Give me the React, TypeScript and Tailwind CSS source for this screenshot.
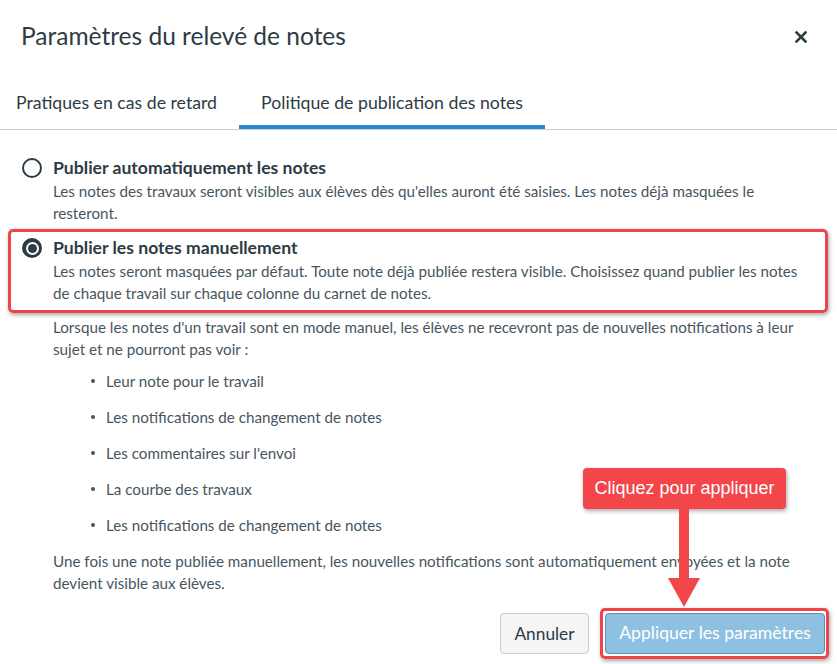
import React from "react";

const bullets = [
  "Leur note pour le travail",
  "Les notifications de changement de notes",
  "Les commentaires sur l'envoi",
  "La courbe des travaux",
  "Les notifications de changement de notes",
];

function Radio({ checked }: { checked?: boolean }) {
  return checked ? (
    <span className="mt-[2px] flex h-[20px] w-[20px] shrink-0 items-center justify-center rounded-full bg-[#2d3b45]">
      <span className="flex h-[13px] w-[13px] items-center justify-center rounded-full bg-white">
        <span className="h-[9px] w-[9px] rounded-full bg-[#2d3b45]" />
      </span>
    </span>
  ) : (
    <span className="mt-[2px] h-[20px] w-[20px] shrink-0 rounded-full border-2 border-[#2d3b45] bg-white" />
  );
}

export default function App() {
  return (
    <div
      className="relative h-[664px] w-[837px] overflow-hidden bg-white text-[#2d3b45]"
      style={{ fontFamily: "Lato, 'Noto Sans', sans-serif" }}
    >
      {/* Header */}
      <div className="flex h-[72px] items-center justify-between pl-[21px] pr-[30px]">
        <h1 className="text-[24.5px] leading-none text-[#2d3b45]">Paramètres du relevé de notes</h1>
        <svg width="12" height="12" viewBox="0 0 12 12" className="mt-[2px]">
          <path d="M1.5 1.5 L10.5 10.5 M10.5 1.5 L1.5 10.5" stroke="#2d3b45" strokeWidth="2.6" strokeLinecap="square" />
        </svg>
      </div>

      {/* Tabs */}
      <div className="flex h-[58px] items-end border-b border-[#c7cdd1]">
        <div className="flex h-full items-center pl-[16px] pr-[20px] pt-[6px] text-[17.7px] text-[#2d3b45]">
          Pratiques en cas de retard
        </div>
        <div className="ml-[2px] flex h-full w-[306px] items-center justify-center border-b-[4px] border-[#2b88d2] pt-[10px] text-[17.7px] text-[#2d3b45]">
          Politique de publication des notes
        </div>
      </div>

      {/* Content */}
      <div className="pl-[22px] pr-[20px] pt-[26px]">
        <div className="flex gap-[11px]">
          <Radio />
          <div>
            <div className="text-[17.6px] font-bold leading-[24px]">Publier automatiquement les notes</div>
            <p className="w-[760px] text-[15.2px] leading-[22px] text-[#475560]">
              Les notes des travaux seront visibles aux élèves dès qu'elles auront été saisies. Les notes déjà masquées le resteront.
            </p>
          </div>
        </div>

        <div className="relative mt-[12px]">
          <div className="flex gap-[11px]">
            <Radio checked />
            <div>
              <div className="text-[17.6px] font-bold leading-[24px]">Publier les notes manuellement</div>
              <p className="w-[760px] text-[15.2px] leading-[22px] text-[#475560]">
                Les notes seront masquées par défaut. Toute note déjà publiée restera visible. Choisissez quand publier les notes de chaque travail sur chaque colonne du carnet de notes.
              </p>
            </div>
          </div>
          <div className="pointer-events-none absolute left-[-14px] top-[-7px] h-[84px] w-[820px] rounded-[5px] border-[3px] border-[#f0434a] shadow-[1px_2px_4px_rgba(0,0,0,0.35)]" />
        </div>

        <div className="pl-[31px] pt-[12px] text-[15.2px] leading-[22px] text-[#475560]">
          <p className="w-[765px]">
            Lorsque les notes d'un travail sont en mode manuel, les élèves ne recevront pas de nouvelles notifications à leur sujet et ne pourront pas voir :
          </p>
          <ul className="mt-[10px] flex flex-col gap-[14px] pl-[38px]">
            {bullets.map((b, i) => (
              <li key={i} className="flex items-center gap-[11px]">
                <span className="h-[4px] w-[4px] rounded-full bg-[#475560]" />
                <span>{b}</span>
              </li>
            ))}
          </ul>
          <p className="mt-[14px] w-[765px]">
            Une fois une note publiée manuellement, les nouvelles notifications sont automatiquement envoyées et la note devient visible aux élèves.
          </p>
        </div>

        {/* Footer buttons */}
        <div className="mt-[19px] flex justify-end gap-[16px]">
          <button className="h-[41px] w-[89px] rounded-[4px] border border-[#c7cdd1] bg-[#f5f5f5] text-[17.3px] text-[#2d3b45]">
            Annuler
          </button>
          <div className="relative">
            <button className="mr-[-8px] h-[41px] w-[220px] rounded-[4px] border border-[#5f8fb0] bg-[#8ec1e1] text-[17.6px] text-white">
              Appliquer les paramètres
            </button>
            <div className="pointer-events-none absolute left-[-5px] top-[-5px] h-[51px] w-[229px] rounded-[5px] border-[3px] border-[#f0434a] shadow-[1px_2px_4px_rgba(0,0,0,0.35)]" />
          </div>
        </div>
      </div>

      {/* Callout annotation */}
      <div
        className="absolute left-[583px] top-[468px] flex h-[41px] w-[203px] items-center justify-center rounded-[4px] bg-[#f2464b] text-[18px] text-white shadow-[1px_2px_4px_rgba(0,0,0,0.35)]"
        style={{ fontFamily: "'Liberation Sans', Arial, sans-serif" }}
      >
        Cliquez pour appliquer
      </div>
      <svg className="absolute left-[664px] top-[509px]" width="40" height="100" viewBox="0 0 40 100">
        <path d="M15 0 H25 V69 H36 L20 98 L4 69 H15 Z" fill="#f2464b" />
      </svg>
    </div>
  );
}
